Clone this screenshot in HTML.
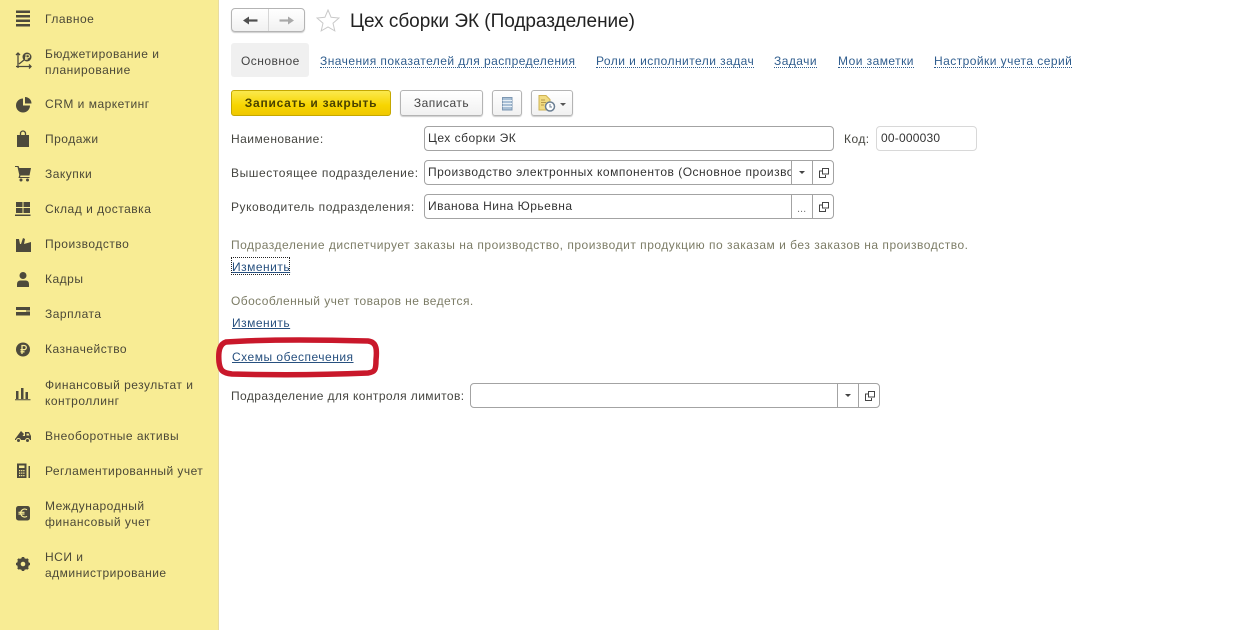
<!DOCTYPE html>
<html lang="ru"><head><meta charset="utf-8"><title>Цех сборки ЭК</title>
<style>
html,body{margin:0;padding:0;background:#fff}
body{width:1241px;height:630px;position:relative;overflow:hidden;font-family:"Liberation Sans",Arial,sans-serif;font-size:12px;color:#4a4a3c}
.a{position:absolute;white-space:nowrap}
#side{left:0;top:0;width:218px;height:630px;background:#f8ec94;border-right:1px solid #e8dca0}
.m{position:absolute;left:45px;font-size:12px;line-height:16px;color:#4b4837;white-space:nowrap;letter-spacing:.5px}
.ic{position:absolute;left:15px;width:18px;height:18px}
.l{position:absolute;font-size:12px;line-height:16px;white-space:nowrap;color:#454540;letter-spacing:.47px}
.t{position:absolute;top:53px;line-height:16px;color:#2f5d8e;border-bottom:1px dotted #2f5d8e;height:14px;white-space:nowrap;letter-spacing:.45px}
.lnk{position:absolute;line-height:15px;color:#27507f;text-decoration:underline;white-space:nowrap;letter-spacing:.5px}
.f{position:absolute;box-sizing:border-box;border:1px solid #a3a3a3;border-radius:4px;height:25px;background:#fff;color:#333;line-height:22px;padding-left:3px;white-space:nowrap;overflow:hidden;letter-spacing:.5px}
.s{position:absolute;width:1px;background:#a3a3a3;height:23px}
.btn{position:absolute;box-sizing:border-box;border:1px solid #b4b4b4;border-radius:3px;height:26px;background:linear-gradient(#fff,#f1f1f1);box-shadow:0 1px 1px #ccc}
.hint{position:absolute;color:#7c7c66;line-height:16px;white-space:nowrap;letter-spacing:.51px}
</style></head><body>
<div id="side" class="a"></div>

<svg class="ic" style="top:10px" viewBox="0 0 18 18"><path d="M1 .5h14v2.500H1zM1 5h14v2.500H1zM1 9.500h14V12H1zM1 14h14v2.500H1z" fill="#4d4a3c"/></svg>
<div class="m" style="top:11px">Главное</div>
<svg class="ic" style="top:52px" viewBox="0 0 18 18"><path d="M3 1v15M1 3l2-2 2 2M1 14.500h15M14 12.500l2 2-2 2M4 12l5-4" stroke="#4d4a3c" stroke-width="1.300" fill="none"/><circle cx="12" cy="5" r="4.500" fill="#4d4a3c"/><path d="M11 8V2.800h2a1.400 1.400 0 010 2.900h-3M10 7h3" stroke="#f8ec94" fill="none"/></svg>
<div class="m" style="top:46px">Бюджетирование и<br>планирование</div>
<svg class="ic" style="top:96px" viewBox="0 0 18 18"><path d="M8 2.500a7 7 0 107 7H8z" fill="#4d4a3c"/><path d="M10 1a6.500 6.500 0 016.500 6.500H10z" fill="#4d4a3c"/></svg>
<div class="m" style="top:96px">CRM и маркетинг</div>
<svg class="ic" style="top:130px" viewBox="0 0 18 18"><path d="M2 5h12v12H2z" fill="#4d4a3c"/><path d="M5.500 7V3.500a2.500 2.500 0 015 0V7" stroke="#4d4a3c" stroke-width="1.300" fill="none"/></svg>
<div class="m" style="top:131px">Продажи</div>
<svg class="ic" style="top:165px" viewBox="0 0 18 18"><path d="M0 1h3.500l.8 2H16l-1.500 7.500H5.500l-.4 1.500h9.400v1H3.500l.8-3L2.500 2H0z" fill="#4d4a3c"/><circle cx="6" cy="15" r="1.500" fill="#4d4a3c"/><circle cx="12.500" cy="15" r="1.500" fill="#4d4a3c"/></svg>
<div class="m" style="top:166px">Закупки</div>
<svg class="ic" style="top:201px" viewBox="0 0 18 18"><path d="M1 1h6.500v5H1zM8.500 1H15v5H8.500zM1 7h6.500v5H1zM8.500 7H15v5H8.500zM0 13.500h15.500V15H0z" fill="#4d4a3c"/></svg>
<div class="m" style="top:201px">Склад и доставка</div>
<svg class="ic" style="top:236px" viewBox="0 0 18 18"><path d="M1 16V3h3l1 5h1l2-6 2 1-1 5 7-2v10z" fill="#4d4a3c"/></svg>
<div class="m" style="top:236px">Производство</div>
<svg class="ic" style="top:271px" viewBox="0 0 18 18"><circle cx="8" cy="4.500" r="3.500" fill="#4d4a3c"/><path d="M2 16v-3q0-3 3-3.500h6q3 .5 3 3.500v3z" fill="#4d4a3c"/></svg>
<div class="m" style="top:271px">Кадры</div>
<svg class="ic" style="top:305px" viewBox="0 0 18 18"><path d="M1 2h14v3H1zM1 7h14v3.500H1z" fill="#4d4a3c"/><path d="M11 6h4" stroke="#4d4a3c"/></svg>
<div class="m" style="top:306px">Зарплата</div>
<svg class="ic" style="top:341px" viewBox="0 0 18 18"><circle cx="8" cy="8.500" r="7" fill="#4d4a3c"/><path d="M7 13V4.500h2.200a2 2 0 010 4.200H5.500M5.500 10.800H9.500" stroke="#f8ec94" stroke-width="1.300" fill="none"/></svg>
<div class="m" style="top:341px">Казначейство</div>
<svg class="ic" style="top:384px" viewBox="0 0 18 18"><path d="M1 7h2.500v8H1zM6 4h2.500v11H6zM10.500 8H13v7h-2.500zM0 15.300h15.500v1H0z" fill="#4d4a3c"/></svg>
<div class="m" style="top:377px">Финансовый результат и<br>контроллинг</div>
<svg class="ic" style="top:427px" viewBox="0 0 18 18"><path d="M0 12l6-8 3 3-1.500 2H10V5h4l2 4v4H0z" fill="#4d4a3c"/><circle cx="3.500" cy="13.500" r="2" fill="#4d4a3c" stroke="#f8ec94"/><circle cx="12.500" cy="13.500" r="2" fill="#4d4a3c" stroke="#f8ec94"/><path d="M11.500 6.500h2l1 2h-3z" fill="#f8ec94"/></svg>
<div class="m" style="top:428px">Внеоборотные активы</div>
<svg class="ic" style="top:462px" viewBox="0 0 18 18"><path d="M2 1.500h9.500v14.500H2z" fill="#4d4a3c"/><path d="M4 3.500h5.500v2.500H4z" fill="#f8ec94"/><path d="M4 8h1.300v1.300H4zM6.100 8h1.300v1.300H6.100zM8.200 8h1.300v1.300H8.200zM4 10.500h1.300v1.300H4zM6.100 10.500h1.300v1.300H6.100zM8.200 10.500h1.300v1.300H8.200zM4 13h1.300v1.300H4zM6.100 13h1.300v1.300H6.100zM8.200 13h1.300v1.300H8.200z" fill="#f8ec94"/><path d="M13.500 4h1.500v12h-1.500z" fill="#4d4a3c"/></svg>
<div class="m" style="top:463px;letter-spacing:.45px">Регламентированный учет</div>
<svg class="ic" style="top:505px" viewBox="0 0 18 18"><rect x="1" y="1" width="14" height="14.500" rx="2.500" fill="#4d4a3c"/><path d="M12 4.800a4 4 0 100 6.500M3.500 7.300h6M3.500 9h6" stroke="#f8ec94" stroke-width="1.200" fill="none"/></svg>
<div class="m" style="top:498px">Международный<br>финансовый учет</div>
<svg class="ic" style="top:556px" viewBox="0 0 18 18"><circle cx="8" cy="8" r="4.500" fill="none" stroke="#4d4a3c" stroke-width="3"/><path d="M8 1v14M1 8h14M3 3l10 10M13 3L3 13" stroke="#4d4a3c" stroke-width="2.600"/><circle cx="8" cy="8" r="2.300" fill="#f8ec94"/></svg>
<div class="m" style="top:549px">НСИ и<br>администрирование</div>

<!-- top bar -->
<div class="btn" style="left:231px;top:8px;width:74px;height:24px;border-radius:4px"></div>
<div class="a" style="left:268px;top:9px;width:1px;height:22px;background:#d6d6d6"></div>
<svg class="a" style="left:243px;top:14px" width="15" height="13" viewBox="0 0 15 13"><path d="M4 6.500h10.500" stroke="#4f4f4f" stroke-width="2.200"/><path d="M0 6.500L6 2.500v8z" fill="#4f4f4f"/></svg>
<svg class="a" style="left:279px;top:14px" width="15" height="13" viewBox="0 0 15 13"><path d="M.5 6.500H11" stroke="#a9a9a9" stroke-width="2.200"/><path d="M15 6.500L9 2.500v8z" fill="#a9a9a9"/></svg>
<svg class="a" style="left:316px;top:9px" width="24" height="23" viewBox="0 0 24 23"><path d="M12 1l3.100 7.300 7.900.7-6 5.200 1.800 7.700-6.800-4-6.800 4 1.800-7.700L1 9l7.900-.7z" fill="#fff" stroke="#c9c9c9"/></svg>
<div class="a" style="left:350px;top:11px;font-size:19px;line-height:22px;color:#222;letter-spacing:-.03px">Цех сборки ЭК (Подразделение)</div>

<!-- tabs -->
<div class="a" style="left:231px;top:43px;width:78px;height:34px;background:#f0f0f0;border-radius:3px"></div>
<div class="l" style="left:241px;top:53px;color:#444">Основное</div>
<div class="t" style="left:320px">Значения показателей для распределения</div>
<div class="t" style="left:596px">Роли и исполнители задач</div>
<div class="t" style="left:774px">Задачи</div>
<div class="t" style="left:838px">Мои заметки</div>
<div class="t" style="left:934px">Настройки учета серий</div>

<!-- command bar -->
<div class="a" style="left:231px;top:90px;width:160px;height:26px;box-sizing:border-box;border:1px solid #c5a800;border-radius:3px;background:linear-gradient(#fbe94e,#f7d500 60%,#f0c800);text-align:center;font-weight:bold;line-height:24px;color:#4a4200;letter-spacing:.75px">Записать и закрыть</div>
<div class="btn" style="left:400px;top:90px;width:83px;line-height:24px;text-align:center;color:#444;letter-spacing:.5px">Записать</div>
<div class="btn" style="left:492px;top:90px;width:30px"></div>
<svg class="a" style="left:502px;top:97px" width="11" height="14" viewBox="0 0 11 14"><path d="M.5.500h9.500v12.500H.5z" fill="#a9c0d6" stroke="#7d97b2"/><path d="M.5 3.500h9.500M.5 6.500h9.500M.5 9.500h9.500" stroke="#e8f0f6"/></svg>
<div class="btn" style="left:531px;top:90px;width:42px"></div>
<svg class="a" style="left:538px;top:95px" width="18" height="17" viewBox="0 0 18 17"><path d="M1 .5h7l4 4V15H1z" fill="#f2dc82" stroke="#cfb354"/><path d="M3 5h4M3 7.500h5M3 10h3" stroke="#b5994a"/><circle cx="12" cy="11.500" r="4.500" fill="#fff" stroke="#6b7f93" stroke-width="1.500"/><path d="M12 9v3h2" stroke="#6b7f93" fill="none"/></svg>
<div class="a" style="left:560px;top:103px;width:0;height:0;border-left:3px solid transparent;border-right:3px solid transparent;border-top:3px solid #555"></div>

<!-- fields -->
<div class="l" style="left:231px;top:131px">Наименование:</div>
<div class="f" style="left:424px;top:126px;width:410px">Цех сборки ЭК</div>
<div class="l" style="left:844px;top:131px">Код:</div>
<div class="f" style="left:876px;top:126px;width:101px;border-color:#d8d8d8;padding-left:4px;letter-spacing:.2px">00-000030</div>

<div class="l" style="left:231px;top:165px;letter-spacing:.58px">Вышестоящее подразделение:</div>
<div class="f" style="left:424px;top:160px;width:410px"><span style="display:block;width:364px;overflow:hidden">Производство электронных компонентов (Основное производство)</span></div>
<div class="s" style="left:791px;top:161px"></div><div class="s" style="left:812px;top:161px"></div>
<div class="a" style="left:799px;top:171px;width:0;height:0;border-left:3px solid transparent;border-right:3px solid transparent;border-top:3px solid #444"></div>
<svg class="a" style="left:819px;top:168px" width="10" height="10" viewBox="0 0 10 10"><path d="M3.500.5h6v5.500h-6zM3 3H.5v6.500h6V7" fill="none" stroke="#444"/></svg>

<div class="l" style="left:231px;top:199px;letter-spacing:.54px">Руководитель подразделения:</div>
<div class="f" style="left:424px;top:194px;width:410px">Иванова Нина Юрьевна</div>
<div class="s" style="left:791px;top:195px"></div><div class="s" style="left:812px;top:195px"></div>
<div class="a" style="left:797px;top:201px;color:#777;line-height:16px;font-size:11px">...</div>
<svg class="a" style="left:819px;top:202px" width="10" height="10" viewBox="0 0 10 10"><path d="M3.500.5h6v5.500h-6zM3 3H.5v6.500h6V7" fill="none" stroke="#444"/></svg>

<div class="hint" style="left:231px;top:237px">Подразделение диспетчирует заказы на производство, производит продукцию по заказам и без заказов на производство.</div>
<div class="a" style="left:231px;top:257px;width:57px;height:16px;border:1px dotted #222"></div>
<div class="lnk" style="left:232px;top:260px">Изменить</div>
<div class="hint" style="left:231px;top:293px;letter-spacing:.43px">Обособленный учет товаров не ведется.</div>
<div class="lnk" style="left:232px;top:316px">Изменить</div>
<div class="lnk" style="left:232px;top:350px">Схемы обеспечения</div>
<svg class="a" style="left:0;top:0" width="400" height="400" viewBox="0 0 400 400"><path d="M226 342C270 339 330 340 368 341C377 342 377 350 376 360C376 370 375 372 368 373C320 375 270 375 232 374C222 373 220 370 219 362C218 350 220 344 226 342Z" fill="none" stroke="#c9182b" stroke-width="5.500"/></svg>

<div class="l" style="left:231px;top:388px;letter-spacing:.41px">Подразделение для контроля лимитов:</div>
<div class="f" style="left:470px;top:383px;width:410px"></div>
<div class="s" style="left:837px;top:384px"></div><div class="s" style="left:858px;top:384px"></div>
<div class="a" style="left:845px;top:394px;width:0;height:0;border-left:3px solid transparent;border-right:3px solid transparent;border-top:3px solid #444"></div>
<svg class="a" style="left:865px;top:391px" width="10" height="10" viewBox="0 0 10 10"><path d="M3.500.5h6v5.500h-6zM3 3H.5v6.500h6V7" fill="none" stroke="#444"/></svg>
</body></html>
